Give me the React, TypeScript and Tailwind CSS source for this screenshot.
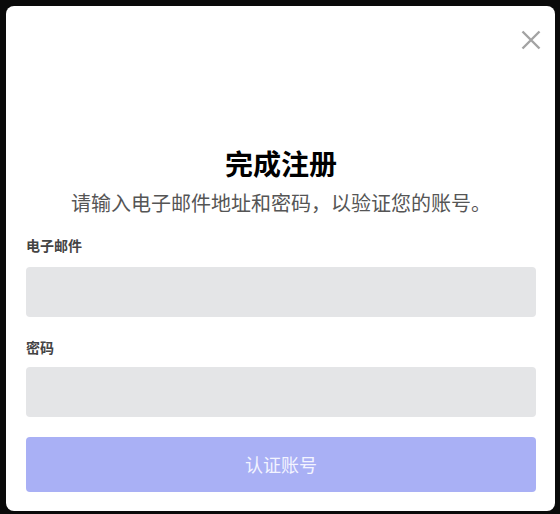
export default function App() {
  return (
    <div className="min-h-screen bg-[#0a0a0a] px-[6px] pt-[6px] pb-[3px] font-['Noto_Sans_CJK_SC',sans-serif]">
      <div className="bg-white rounded-lg h-[505px] w-[549px] pl-5 pr-[19px] pt-6 flex flex-col">
        <div className="flex justify-end -mr-[5px]">
          <button className="w-5 h-5 text-[#a3a3a3]" aria-label="关闭">
            <svg viewBox="0 0 20 20" className="w-5 h-5" fill="none" stroke="currentColor" strokeWidth="2.4">
              <path d="M1.5 1.5 L18.5 18.5 M18.5 1.5 L1.5 18.5" />
            </svg>
          </button>
        </div>

        <h1 className="mt-[95px] text-center text-[28px] leading-9 font-bold text-black">完成注册</h1>
        <p className="mt-2 text-center text-[20px] leading-7 text-[#555]">
          请输入电子邮件地址和密码，以验证您的账号。
        </p>

        <label className="mt-[18px] text-sm leading-5 font-bold text-[#444]">电子邮件</label>
        <input type="email" className="mt-[12px] h-[50px] w-full rounded bg-[#e4e5e7] outline-none px-3" />

        <label className="mt-5 text-sm leading-5 font-bold text-[#444]">密码</label>
        <input type="password" className="mt-[10px] h-[50px] w-full rounded bg-[#e4e5e7] outline-none px-3" />

        <button className="mt-5 h-[55px] w-full rounded bg-[#a9b0f5] text-[18px] text-[#f3f4ff]">
          认证账号
        </button>
      </div>
    </div>
  )
}
